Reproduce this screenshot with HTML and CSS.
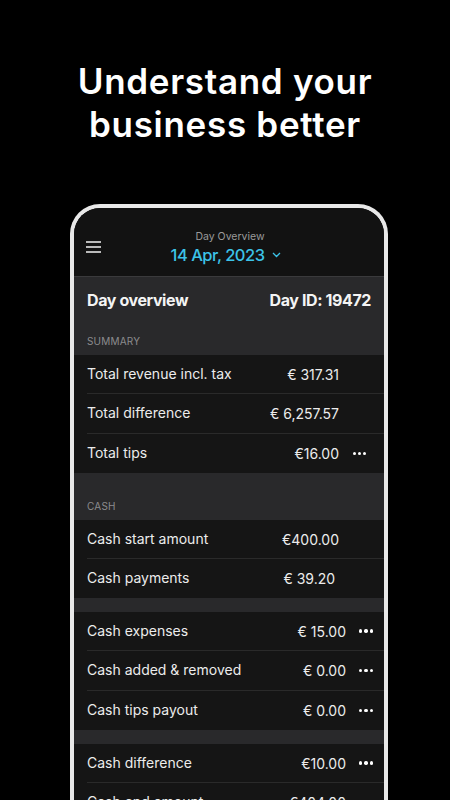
FILE: index.html
```html
<!DOCTYPE html>
<html lang="en">
<head>
<meta charset="utf-8">
<title>Day Overview</title>
<link rel="stylesheet" href="styles.css">
</head>
<body>
<h1 class="headline">Understand your<br>business better</h1>
<div class="phone">
  <div class="screen">
    <header class="topbar">
      <svg class="menu" width="15" height="12" viewBox="0 0 15 12"><path d="M0 1h15M0 6h15M0 11h15" stroke="#f2f2f2" stroke-width="1.5"/></svg>
      <div class="topbar-title">
        <div class="topbar-sub">Day Overview</div>
        <div class="topbar-date">14 Apr, 2023 <svg class="chev" width="9" height="6" viewBox="0 0 9 6"><path d="M1 1l3.5 3.5L8 1" fill="none" stroke="#3cc3e8" stroke-width="1.3"/></svg></div>
      </div>
    </header>
    <div class="overview-head">
      <span>Day overview</span>
      <span>Day ID: 19472</span>
    </div>
    <div class="section-label first">SUMMARY</div>
    <div class="card a">
      <div class="row"><span class="label">Total revenue incl. tax</span><span class="value">€ 317.31</span><span class="more"></span></div>
      <div class="row"><span class="label">Total difference</span><span class="value">€ 6,257.57</span><span class="more"></span></div>
      <div class="row"><span class="label">Total tips</span><span class="value">€16.00</span><span class="more"><i></i><i></i><i></i></span></div>
    </div>
    <div class="section-label">CASH</div>
    <div class="card a">
      <div class="row"><span class="label">Cash start amount</span><span class="value">€400.00</span><span class="more"></span></div>
      <div class="row"><span class="label">Cash payments</span><span class="value">€ 39.20&nbsp;</span><span class="more"></span></div>
    </div>
    <div class="gap"></div>
    <div class="card b">
      <div class="row"><span class="label">Cash expenses</span><span class="value">€ 15.00</span><span class="more"><i></i><i></i><i></i></span></div>
      <div class="row"><span class="label">Cash added &amp; removed</span><span class="value">€ 0.00</span><span class="more"><i></i><i></i><i></i></span></div>
      <div class="row"><span class="label">Cash tips payout</span><span class="value">€ 0.00</span><span class="more"><i></i><i></i><i></i></span></div>
    </div>
    <div class="gap"></div>
    <div class="card b">
      <div class="row"><span class="label">Cash difference</span><span class="value">€10.00</span><span class="more"><i></i><i></i><i></i></span></div>
      <div class="row"><span class="label">Cash end amount</span><span class="value">€404.00</span><span class="more"><i></i><i></i><i></i></span></div>
    </div>
  </div>
</div>
</body>
</html>
```
FILE: styles.css
```css
* { box-sizing: border-box; }
html, body { margin: 0; padding: 0; }
body {
  width: 450px;
  height: 800px;
  overflow: hidden;
  background: #000;
  font-family: Inter, "Noto Sans", "Liberation Sans", sans-serif;
  color: #ececec;
}
.headline {
  margin: 0;
  padding-top: 60px;
  font-size: 35px;
  line-height: 43px;
  font-weight: 600;
  color: #fff;
  text-align: center;
  letter-spacing: 0.7px;
}
.phone {
  margin: 58px 0 0 70px;
  width: 318px;
  height: 700px;
  border: 4px solid #e8e8e8;
  border-bottom: none;
  border-radius: 30px 30px 0 0;
  background: #121212;
  overflow: hidden;
}
.screen {
  border-radius: 26px 26px 0 0;
  overflow: hidden;
  background: #29292b;
}
.topbar {
  height: 69px;
  background: #121212;
  border-bottom: 1px solid #3a3a3c;
  display: flex;
  align-items: center;
  padding-left: 12px;
}
.menu { margin-top: 9px; }
.topbar-title {
  flex: 1;
  text-align: center;
  margin-left: -27px;
  padding-top: 11px;
}
.topbar-sub {
  font-size: 10.5px;
  line-height: 14px;
  color: #9a9a9a;
  padding-left: 2px;
}
.topbar-date {
  font-size: 16.5px;
  line-height: 21px;
  font-weight: 500;
  color: #3cc3e8;
  margin-top: 1px;
  letter-spacing: -0.5px;
  padding-right: 6px;
}
.chev { vertical-align: middle; margin-left: 4px; margin-top: -3px; }
.overview-head {
  display: flex;
  justify-content: space-between;
  padding: 12px 13px 0 13px;
  font-size: 16px;
  line-height: 22px;
  font-weight: 700;
  color: #f4f4f4;
  letter-spacing: -0.4px;
}
.section-label {
  font-size: 10px;
  line-height: 12px;
  color: #8c8c8e;
  padding: 27px 13px 8px;
  letter-spacing: 0.2px;
}
.section-label.first { padding-top: 24px; }
.card { background: #151515; }
.row {
  height: 38px;
  display: flex;
  align-items: center;
  padding-left: 13px;
  font-size: 14px;
  position: relative;
}
.row + .row {
  height: 40px;
  padding-top: 1px;
}
.row + .row::before {
  content: "";
  position: absolute;
  left: 13px;
  right: 0;
  top: 0;
  height: 1px;
  background: #2a2a2a;
}
.label { flex: 1; color: #ececec; margin-top: -2px; }
.value { color: #ececec; text-align: right; }
.more {
  display: flex;
  justify-content: space-between;
  align-items: center;
}
.more i {
  width: 3.4px;
  height: 3.4px;
  border-radius: 50%;
  background: #fff;
}
.card.a .row { padding-right: 18px; }
.card.a .more { width: 13px; margin-left: 14px; }
.card.b .row { padding-right: 11px; }
.card.b .more { width: 14px; margin-left: 13px; }
.gap { height: 14px; }
```
